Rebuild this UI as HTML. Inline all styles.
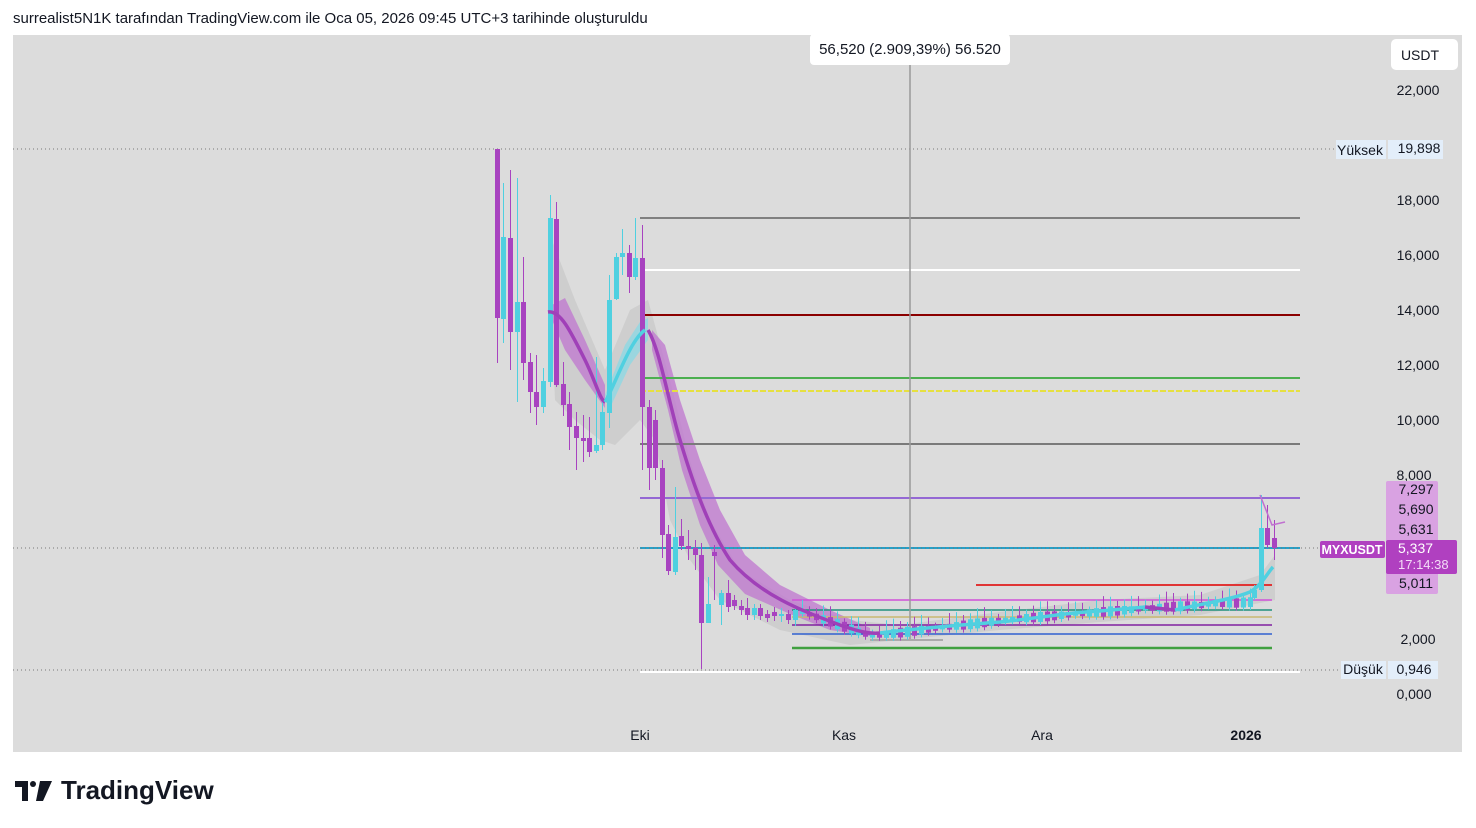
<!DOCTYPE html>
<html><head><meta charset="utf-8"><style>
body{margin:0;width:1476px;height:828px;background:#fff;font-family:"Liberation Sans",sans-serif;overflow:hidden;position:relative}
.hdr{position:absolute;left:13px;top:10px;font-size:15px;color:#131722}
.t{font-size:13px;fill:#131722;font-family:"Liberation Sans",sans-serif}
</style></head><body>
<div class="hdr">surrealist5N1K tarafından TradingView.com ile Oca 05, 2026 09:45 UTC+3 tarihinde oluşturuldu</div>
<svg id="c" width="1476" height="828" style="position:absolute;left:0;top:0">
<rect x="13" y="35" width="1449" height="717" fill="#dcdcdc"/>
<path d="M548,230 L575,300 L605,370 L630,310 L648,300 L670,380 L690,460 L710,520 L740,570 L790,600 L850,620 L900,625 L1000,612 L1100,600 L1200,595 L1260,575 L1275,555 L1275,600 L1200,615 L1100,622 L1000,630 L900,640 L850,645 L780,630 L720,600 L690,560 L670,520 L655,440 L640,420 L615,445 L600,440 L575,420 L555,400 Z" fill="#c8c8c8" opacity="0.7"/>
<path d="M552,305 L565,298 L585,340 L605,385 L605,408 L585,380 L565,350 L552,320 Z" fill="#c07cd0" opacity="0.8"/>
<path d="M605,395 L625,345 L640,322 L648,318 L648,340 L630,365 L610,408 Z" fill="#8fd8e4" opacity="0.8"/>
<path d="M652,330 L665,345 L680,400 L700,460 L720,510 L745,555 L780,585 L830,610 L870,628 L870,636 L830,630 L790,614 L745,594 L718,565 L700,525 L682,470 L668,410 L652,350 Z" fill="#c07cd0" opacity="0.8"/>
<g stroke-width="2">
<line x1="640" x2="1300" y1="218" y2="218" stroke="#808080"/>
<line x1="640" x2="1300" y1="270" y2="270" stroke="#ffffff"/>
<line x1="640" x2="1300" y1="315" y2="315" stroke="#8b0000"/>
<line x1="640" x2="1300" y1="378" y2="378" stroke="#4caf50"/>
<line x1="640" x2="1300" y1="391" y2="391" stroke="#e6e040" stroke-dasharray="6,2"/>
<line x1="640" x2="1300" y1="444" y2="444" stroke="#7a7a7a"/>
<line x1="640" x2="1300" y1="498" y2="498" stroke="#9468d4"/>
<line x1="640" x2="1300" y1="548" y2="548" stroke="#25a0c8"/>
<line x1="640" x2="1300" y1="672" y2="672" stroke="#ffffff"/>
<line x1="976" x2="1272" y1="585" y2="585" stroke="#e03535"/>
<line x1="792" x2="1272" y1="600" y2="600" stroke="#d050d8" stroke-width="1.5"/>
<line x1="792" x2="1272" y1="610" y2="610" stroke="#20907c" stroke-width="1.5"/>
<line x1="792" x2="1272" y1="617" y2="617" stroke="#c8b870" stroke-width="1.5"/>
<line x1="792" x2="1272" y1="625" y2="625" stroke="#8020a0" stroke-width="1.5"/>
<line x1="792" x2="1272" y1="634" y2="634" stroke="#3060d0" stroke-width="1.5"/>
<line x1="792" x2="1272" y1="648" y2="648" stroke="#40a040" stroke-width="2.5"/>
</g>
<g stroke="#777" stroke-width="1" stroke-dasharray="1,3">
<line x1="13" x2="1336" y1="149" y2="149"/>
<line x1="13" x2="1320" y1="548" y2="548"/>
<line x1="13" x2="1342" y1="670" y2="670"/>
</g>
<line x1="910" x2="910" y1="35" y2="640" stroke="#9a9a9a" stroke-width="1.5"/>
<path d="M870,640 L943,640" stroke="#aaa" stroke-width="2"/>
<g id="cd"></g>
<path d="M548,312 C560,310 570,330 585,360 C595,380 600,400 605,402" stroke="#a040b8" stroke-width="3.5" fill="none"/>
<path d="M605,402 C615,385 630,340 645,330" stroke="#50d0e0" stroke-width="3.5" fill="none"/>
<path d="M648,330 C660,350 668,400 680,440 C695,490 710,530 730,560 C760,595 800,610 840,625 C860,632 870,634 880,633" stroke="#a040b8" stroke-width="3.5" fill="none"/>
<path d="M880,633 C920,628 960,625 1000,622 C1040,618 1070,612 1100,611 L1145,607" stroke="#50d0e0" stroke-width="3.5" fill="none"/>
<path d="M1145,607 L1175,610" stroke="#a040b8" stroke-width="3.5" fill="none"/>
<path d="M1175,610 C1200,604 1230,600 1250,592 C1262,585 1268,572 1273,567" stroke="#50d0e0" stroke-width="3.5" fill="none"/>
<path d="M1260,495 L1272,525 L1285,522" stroke="#c070d0" stroke-width="1.5" fill="none"/>
<rect x="810" y="34" width="200" height="31" rx="4" fill="#fff"/>
<text x="910" y="54" class="t" text-anchor="middle" style="font-size:15px">56,520 (2.909,39%) 56.520</text>
<rect x="1391" y="39" width="67" height="31" rx="5" fill="#fff"/>
<text x="1420" y="60" class="t" text-anchor="middle" style="font-size:14px">USDT</text>
<g>
<text x="1418" y="95" class="t" text-anchor="middle" style="font-size:14px">22,000</text>
<text x="1418" y="205" class="t" text-anchor="middle" style="font-size:14px">18,000</text>
<text x="1418" y="260" class="t" text-anchor="middle" style="font-size:14px">16,000</text>
<text x="1418" y="315" class="t" text-anchor="middle" style="font-size:14px">14,000</text>
<text x="1418" y="370" class="t" text-anchor="middle" style="font-size:14px">12,000</text>
<text x="1418" y="425" class="t" text-anchor="middle" style="font-size:14px">10,000</text>
<text x="1414" y="480" class="t" text-anchor="middle" style="font-size:14px">8,000</text>
<text x="1418" y="644" class="t" text-anchor="middle" style="font-size:14px">2,000</text>
<text x="1414" y="699" class="t" text-anchor="middle" style="font-size:14px">0,000</text>
</g>
<rect x="1336" y="140" width="50" height="19" fill="#e3eefa"/>
<text x="1360" y="155" class="t" text-anchor="middle" style="font-size:14px">Yüksek</text>
<rect x="1388" y="140" width="55" height="19" fill="#e3eefa"/>
<text x="1419" y="153" class="t" text-anchor="middle" style="font-size:14px">19,898</text>
<rect x="1341" y="661" width="45" height="18" fill="#e3eefa"/>
<text x="1363" y="674" class="t" text-anchor="middle" style="font-size:14px">Düşük</text>
<rect x="1388" y="661" width="50" height="18" fill="#e3eefa"/>
<text x="1414" y="674" class="t" text-anchor="middle" style="font-size:14px">0,946</text>
<rect x="1386" y="481" width="52" height="113" rx="2" fill="#d9a2e2"/>
<text x="1416" y="494" class="t" text-anchor="middle" style="font-size:14px">7,297</text>
<text x="1416" y="514" class="t" text-anchor="middle" style="font-size:14px">5,690</text>
<text x="1416" y="534" class="t" text-anchor="middle" style="font-size:14px">5,631</text>
<text x="1416" y="588" class="t" text-anchor="middle" style="font-size:14px">5,011</text>
<rect x="1386" y="540" width="71" height="34" rx="2" fill="#b040c0"/>
<text x="1398" y="553" class="t" style="fill:#fff;font-size:14px">5,337</text>
<text x="1398" y="569" class="t" style="fill:#f3dcf7;font-size:13px">17:14:38</text>
<rect x="1320" y="541" width="65" height="17" rx="2" fill="#b040c0"/>
<text x="1352" y="554" class="t" text-anchor="middle" style="fill:#fff;font-weight:bold;font-size:12.5px">MYXUSDT</text>
<text x="640" y="740" class="t" text-anchor="middle" style="font-size:14px">Eki</text>
<text x="844" y="740" class="t" text-anchor="middle" style="font-size:14px">Kas</text>
<text x="1042" y="740" class="t" text-anchor="middle" style="font-size:14px">Ara</text>
<text x="1246" y="740" class="t" text-anchor="middle" style="font-weight:bold;font-size:14px">2026</text>
<path d="M15,781 h13 v20 h-6 v-14 h-7 z" fill="#131722"/>
<circle cx="33" cy="784" r="3" fill="#131722"/>
<path d="M40,781 h12 l-9,20 h-7 z" fill="#131722"/>
<text x="61" y="799" style="font-family:'Liberation Sans',sans-serif;font-size:26px;font-weight:bold;fill:#131722">TradingView</text>
</svg>
<script>
var P="#a843c0",C="#4fd0e0";
var d=[[495,149,318,149,363,P],[501,319,237,183,343,C],[508,238,332,170,370,P],[515,332,302,178,402,C],[521,302,363,257,380,P],[528,362,392,353,413,P],[534,392,407,355,425,P],[541,407,381,368,413,C],[548,382,218,195,387,C],[554,219,385,202,387,P],[561,384,405,362,416,P],[567,404,427,392,450,P],[574,426,438,412,470,P],[581,438,441,415,462,P],[587,438,452,417,457,P],[594,451,445,357,453,C],[600,445,412,400,450,C],[607,413,300,275,428,C],[614,299,257,253,300,C],[620,257,253,229,275,C],[627,253,277,245,293,P],[633,277,258,218,280,C],[640,258,407,225,470,P],[647,407,468,400,490,P],[653,420,468,410,480,P],[660,468,535,460,558,P],[666,534,571,525,575,P],[673,572,537,487,575,C],[679,536,546,519,550,P],[686,546,549,530,560,P],[693,548,555,540,570,P],[699,555,623,543,669,P],[706,623,604,577,623,C],[712,552,556,545,600,P],[719,605,593,590,625,C],[726,593,607,580,612,P],[732,600,606,595,610,P],[739,606,610,600,615,P],[745,608,615,598,620,P],[752,615,608,604,620,C],[758,608,616,604,620,P],[765,614,618,610,622,P],[772,612,616,607,621,P],[779,616,614,608,622,C],[786,614,620,610,624,P],[793,620,610,605,626,C]];
for(var x=800;x<1252;x+=7){var tgt=x<870?(612+(x-800)*0.35):x<1000?(636-(x-870)*0.12):x<1150?(620-(x-1000)*0.08):(608-(x-1150)*0.06);
var up=Math.sin(x*0.37)>-0.1;var h=3+Math.abs(Math.sin(x*1.3))*7;var o=up?tgt+h/2:tgt-h/2,c=up?tgt-h/2:tgt+h/2;
d.push([x,o,c,Math.min(o,c)-3-Math.abs(Math.sin(x))*8,Math.max(o,c)+3,up?C:P]);}
d.push([1252,598,590,585,600,C],[1259,590,528,495,592,C],[1265,528,545,505,548,P],[1272,538,548,520,560,P]);
var s="";d.forEach(function(a){var t=Math.min(a[1],a[2]),b=Math.max(a[1],a[2]);if(b-t<1.5)b=t+1.5;
s+='<line x1="'+(a[0]+2.5)+'" x2="'+(a[0]+2.5)+'" y1="'+a[3]+'" y2="'+a[4]+'" stroke="'+a[5]+'" stroke-width="1"/>';
s+='<rect x="'+a[0]+'" y="'+t+'" width="5" height="'+(b-t)+'" fill="'+a[5]+'"/>';});
document.getElementById("cd").innerHTML=s;
</script>
</body></html>
